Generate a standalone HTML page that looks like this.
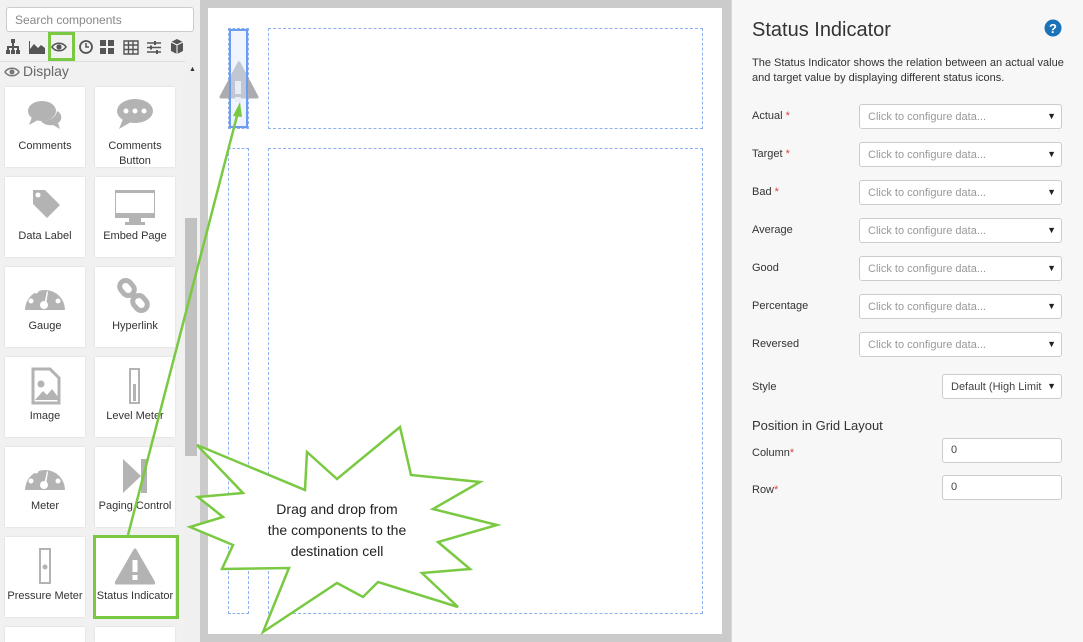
<!DOCTYPE html>
<html><head><meta charset="utf-8"><style>
*{box-sizing:border-box;margin:0;padding:0}
html,body{width:1083px;height:642px;overflow:hidden}
body{font-family:"Liberation Sans",sans-serif;background:#f0f0f0;position:relative}
.abs{position:absolute}
.left{left:0;top:0;width:200px;height:642px;background:#f1f1f1;overflow:hidden}
.search{left:6px;top:7px;width:188px;height:25px;border:1px solid #ccc;border-radius:3px;background:#fff;font-size:12px;color:#888;padding:5px 8px}
.tile{position:absolute;width:80px;height:80px;background:#fff;box-shadow:0 0 2px rgba(0,0,0,.12);font-size:11px;color:#333;text-align:center}
.tile svg{position:absolute;left:20px;top:10px}
.tile span{position:absolute;left:0;right:0;top:52px;line-height:15px}
.canvas{left:200px;top:0;width:531px;height:642px;background:#cbcbcb}
.white{left:208px;top:8px;width:514px;height:626px;background:#fff}
.dash{position:absolute;border:1px dashed #8fb0f0}
.right{left:731px;top:0;width:352px;height:642px;background:#f7f7f7;border-left:1px solid #d8d8d8}
.lbl{position:absolute;left:20px;font-size:11px;color:#333}
.req{color:#e04040}
.sel{position:absolute;left:127px;width:203px;height:25px;background:#fff;border:1px solid #ccc;border-radius:3px;font-size:11px;color:#999;padding:6px 8px}
.sel:after{content:"▼";position:absolute;right:5px;top:6px;font-size:9px;color:#222}
.inp{position:absolute;left:210px;width:120px;height:25px;background:#fff;border:1px solid #ccc;border-radius:3px;font-size:11px;color:#444;padding:5px 8px}
</style></head><body>
<div class="abs left">
<div class="abs search">Search components</div>
<svg class="abs" style="left:5px;top:37px" width="190" height="20" viewBox="0 0 190 20" fill="#555">
<rect x="6" y="2" width="4" height="4"/><rect x="7" y="6" width="2" height="3"/><rect x="2" y="9" width="12" height="2"/><rect x="2" y="9" width="2" height="4"/><rect x="12" y="9" width="2" height="4"/><rect x="7" y="9" width="2" height="4"/><rect x="1" y="13" width="4" height="4"/><rect x="6" y="13" width="4" height="4"/><rect x="11" y="13" width="4" height="4"/>
<path d="M24 17V4h1v8l4-5 4 4 3-3 4 3v6z"/>
<path d="M47 10c3-5 11-5 14 0c-3 5-11 5-14 0z" fill="none" stroke="#555" stroke-width="1.6"/><circle cx="54" cy="10" r="2.6"/>
<circle cx="81" cy="10" r="6" fill="none" stroke="#555" stroke-width="1.8"/><path d="M81 6v4h3" fill="none" stroke="#555" stroke-width="1.5"/>
<rect x="95" y="3" width="6" height="6"/><rect x="103" y="3" width="6" height="6"/><rect x="95" y="11" width="6" height="6"/><rect x="103" y="11" width="6" height="6"/>
<path d="M119 4h14v13h-14z M119 8h14 M119 12.5h14 M123.5 4v13 M128 4v13" fill="none" stroke="#555" stroke-width="1.4"/>
<path d="M142 6h14M142 10.5h14M142 15h14" stroke="#555" stroke-width="1.4"/><rect x="149" y="4" width="2" height="4"/><rect x="145" y="8.5" width="2" height="4"/><rect x="151" y="13" width="2" height="4"/>
<path d="M166 5l6-3 6 3v9l-6 3-6-3z"/><path d="M166 5l6 3 6-3M172 8v9" fill="none" stroke="#fff" stroke-width="1"/>
</svg>
<div class="abs" style="left:48px;top:32px;width:27px;height:29px;border:3px solid #7ac943"></div>
<div class="abs" style="left:0;top:61px;width:185px;height:1px;background:#ddd"></div>
<svg class="abs" style="left:4px;top:66px" width="16" height="12" viewBox="0 0 16 12"><path d="M1 6c3-5 11-5 14 0c-3 5-11 5-14 0z" fill="none" stroke="#777" stroke-width="1.5"/><circle cx="8" cy="6" r="2.5" fill="#777"/></svg>
<div class="abs" style="left:23px;top:63px;font-size:14px;color:#666">Display</div>
<div class="abs" style="left:185px;top:62px;width:13px;height:580px;background:#f0f0f0"></div>
<div class="abs" style="left:189px;top:66px;font-size:7px;color:#333">▲</div>
<div class="abs" style="left:185px;top:218px;width:12px;height:238px;background:#c1c1c1"></div>

<div class="tile" style="left:5px;top:87px"><svg width="40" height="40" viewBox="0 0 40 40" fill="#b3b3b3"><ellipse cx="17" cy="14" rx="14" ry="10"/><path d="M7 20l-3 8 9-5z"/><path d="M32 14c5 2 6 9 1 12l2 6-7-4c-5 1-10-1-12-4c8 0 15-3 16-10z"/></svg><span>Comments</span></div>
<div class="tile" style="left:95px;top:87px"><svg width="40" height="40" viewBox="0 0 40 40" fill="#b3b3b3"><ellipse cx="20" cy="14" rx="18" ry="12"/><path d="M8 22l-4 10 12-7z"/><circle cx="11" cy="14" r="2.5" fill="#fff"/><circle cx="20" cy="14" r="2.5" fill="#fff"/><circle cx="29" cy="14" r="2.5" fill="#fff"/></svg><span>Comments<br>Button</span></div>
<div class="tile" style="left:5px;top:177px"><svg width="40" height="40" viewBox="0 0 40 40" fill="#b3b3b3"><path d="M8 3h12l15 15-13 13L8 17z"/><circle cx="13" cy="8" r="2.5" fill="#fff"/></svg><span>Data Label</span></div>
<div class="tile" style="left:95px;top:177px"><svg width="40" height="40" viewBox="0 0 40 40" fill="#b3b3b3"><rect x="-2" y="3" width="44" height="28" rx="2"/><rect x="1" y="6" width="38" height="20" fill="#fff"/><rect x="14" y="31" width="12" height="5"/><rect x="10" y="35" width="20" height="3"/></svg><span>Embed Page</span></div>
<div class="tile" style="left:5px;top:267px"><svg width="40" height="40" viewBox="0 0 40 40" fill="#b3b3b3"><path d="M0 33a20 20 0 0 1 40 0z"/><circle cx="6" cy="24" r="2.5" fill="#fff"/><circle cx="11" cy="14" r="2.5" fill="#fff"/><circle cx="20" cy="9" r="2.5" fill="#fff"/><circle cx="33" cy="24" r="2.5" fill="#fff"/><circle cx="19" cy="28" r="4" fill="#fff"/><path d="M19 28l3-14 1 1-2 13z" fill="#fff"/></svg><span>Gauge</span></div>
<div class="tile" style="left:95px;top:267px"><svg width="40" height="40" viewBox="0 0 40 40" fill="none" stroke="#b3b3b3" stroke-width="5"><rect x="6" y="3" width="12" height="16" rx="6" transform="rotate(-40 12 11)"/><rect x="19" y="18" width="12" height="16" rx="6" transform="rotate(-40 25 26)"/></svg><span>Hyperlink</span></div>
<div class="tile" style="left:5px;top:357px"><svg width="40" height="40" viewBox="0 0 40 40"><path d="M8 2h17l9 9v25H8z" fill="none" stroke="#b3b3b3" stroke-width="3"/><circle cx="16" cy="17" r="3.5" fill="#b3b3b3"/><path d="M10 33l8-9 4 4 5-6 6 8v3z" fill="#b3b3b3"/></svg><span>Image</span></div>
<div class="tile" style="left:95px;top:357px"><svg width="40" height="40" viewBox="0 0 40 40"><rect x="15" y="2" width="9" height="34" fill="none" stroke="#b3b3b3" stroke-width="2"/><rect x="18" y="17" width="3" height="17" fill="#b3b3b3"/></svg><span>Level Meter</span></div>
<div class="tile" style="left:5px;top:447px"><svg width="40" height="40" viewBox="0 0 40 40" fill="#b3b3b3"><path d="M0 33a20 20 0 0 1 40 0z"/><circle cx="6" cy="24" r="2.5" fill="#fff"/><circle cx="11" cy="14" r="2.5" fill="#fff"/><circle cx="20" cy="9" r="2.5" fill="#fff"/><circle cx="33" cy="24" r="2.5" fill="#fff"/><circle cx="19" cy="28" r="4" fill="#fff"/><path d="M19 28l3-14 1 1-2 13z" fill="#fff"/></svg><span>Meter</span></div>
<div class="tile" style="left:95px;top:447px"><svg width="40" height="40" viewBox="0 0 40 40" fill="#b3b3b3"><path d="M8 2l18 17-18 17z"/><rect x="26" y="2" width="6" height="34"/></svg><span>Paging Control</span></div>
<div class="tile" style="left:5px;top:537px"><svg width="40" height="40" viewBox="0 0 40 40"><rect x="15" y="2" width="10" height="34" fill="none" stroke="#b3b3b3" stroke-width="2"/><circle cx="20" cy="20" r="2.5" fill="#b3b3b3"/></svg><span>Pressure Meter</span></div>
<div class="tile" style="left:95px;top:537px"><svg width="40" height="40" viewBox="0 0 40 40" fill="#b3b3b3"><path d="M20 3l19 33H1z" stroke="#b3b3b3" stroke-width="3" stroke-linejoin="round"/><rect x="17.5" y="13" width="5" height="12" fill="#fff"/><rect x="17.5" y="28" width="5" height="5" fill="#fff"/></svg><span>Status Indicator</span></div>
<div class="tile" style="left:5px;top:627px;height:15px"></div><div class="tile" style="left:95px;top:627px;height:15px"></div>
<div class="abs" style="left:93px;top:535px;width:86px;height:84px;border:3px solid #7ac943"></div>
</div>

<div class="abs canvas"></div>
<div class="abs white">
<div class="dash" style="left:20px;top:20px;width:21px;height:101px"></div>
<div class="dash" style="left:60px;top:20px;width:435px;height:101px"></div>
<div class="dash" style="left:20px;top:140px;width:21px;height:466px"></div>
<div class="dash" style="left:60px;top:140px;width:435px;height:466px;border-bottom:1px dashed #8fb0f0"></div>
<svg class="abs" style="left:10px;top:52px" width="42" height="42" viewBox="0 0 42 42"><path d="M21 3l18 34H3z" fill="#acacb0" stroke="#acacb0" stroke-width="3" stroke-linejoin="round"/></svg>
<div class="abs" style="left:21px;top:21px;width:19px;height:99px;border:2px solid #6b9cf0;background:rgba(220,230,255,.45)"></div>
<div class="abs" style="left:27px;top:73px;width:6px;height:13px;background:#e8ecf5"></div>
<div class="abs" style="left:27px;top:89px;width:6px;height:5px;background:#e8ecf5"></div>
</div>

<div class="abs right">
<div class="abs" style="left:20px;top:19px;font-size:20px;color:#333">Status Indicator</div>
<svg class="abs" style="left:312px;top:19px" width="18" height="18" viewBox="0 0 18 18"><circle cx="9" cy="9" r="8.5" fill="#1a73b8"/><text x="9" y="14" text-anchor="middle" font-family="Liberation Sans" font-weight="bold" font-size="13" fill="#fff">?</text></svg>
<div class="abs" style="left:20px;top:56px;width:320px;font-size:11px;line-height:15px;color:#333">The Status Indicator shows the relation between an actual value and target value by displaying different status icons.</div>
<div class="lbl" style="top:110px">Actual <span class="req">*</span></div><div class="sel" style="top:104px">Click to configure data...</div>
<div class="lbl" style="top:148px">Target <span class="req">*</span></div><div class="sel" style="top:142px">Click to configure data...</div>
<div class="lbl" style="top:186px">Bad <span class="req">*</span></div><div class="sel" style="top:180px">Click to configure data...</div>
<div class="lbl" style="top:224px">Average</div><div class="sel" style="top:218px">Click to configure data...</div>
<div class="lbl" style="top:262px">Good</div><div class="sel" style="top:256px">Click to configure data...</div>
<div class="lbl" style="top:300px">Percentage</div><div class="sel" style="top:294px">Click to configure data...</div>
<div class="lbl" style="top:338px">Reversed</div><div class="sel" style="top:332px">Click to configure data...</div>
<div class="lbl" style="top:381px">Style</div><div class="sel" style="top:374px;left:210px;width:120px;color:#444;white-space:nowrap;overflow:hidden">Default (High Limit</div>
<div class="abs" style="left:20px;top:418px;font-size:13px;color:#333">Position in Grid Layout</div>
<div class="lbl" style="top:447px">Column<span class="req">*</span></div><div class="inp" style="top:438px">0</div>
<div class="lbl" style="top:484px">Row<span class="req">*</span></div><div class="inp" style="top:475px">0</div>
</div>

<svg class="abs" style="left:0;top:0" width="1083" height="642" viewBox="0 0 1083 642">
<line x1="128" y1="535" x2="238" y2="112" stroke="#7ac943" stroke-width="2.5"/>
<path d="M240 102l-7 14 9 1z" fill="#7ac943"/>
<path d="M197 445L305 490L307 452L337 479L400 427L411 475L480 482L433 509L497 525L438 542L470 569L422 573L458 607L378 582L363 597L337 583L263 632L289 568L222 569L233 545L190 527L223 517L198 497L243 493Z" fill="#fff" stroke="#7ac943" stroke-width="2.5" stroke-linejoin="miter"/>
<text font-family="Liberation Sans" font-size="14" fill="#222" text-anchor="middle"><tspan x="337" y="514">Drag and drop from</tspan><tspan x="337" y="535">the components to the</tspan><tspan x="337" y="556">destination cell</tspan></text>
</svg>
</body></html>
